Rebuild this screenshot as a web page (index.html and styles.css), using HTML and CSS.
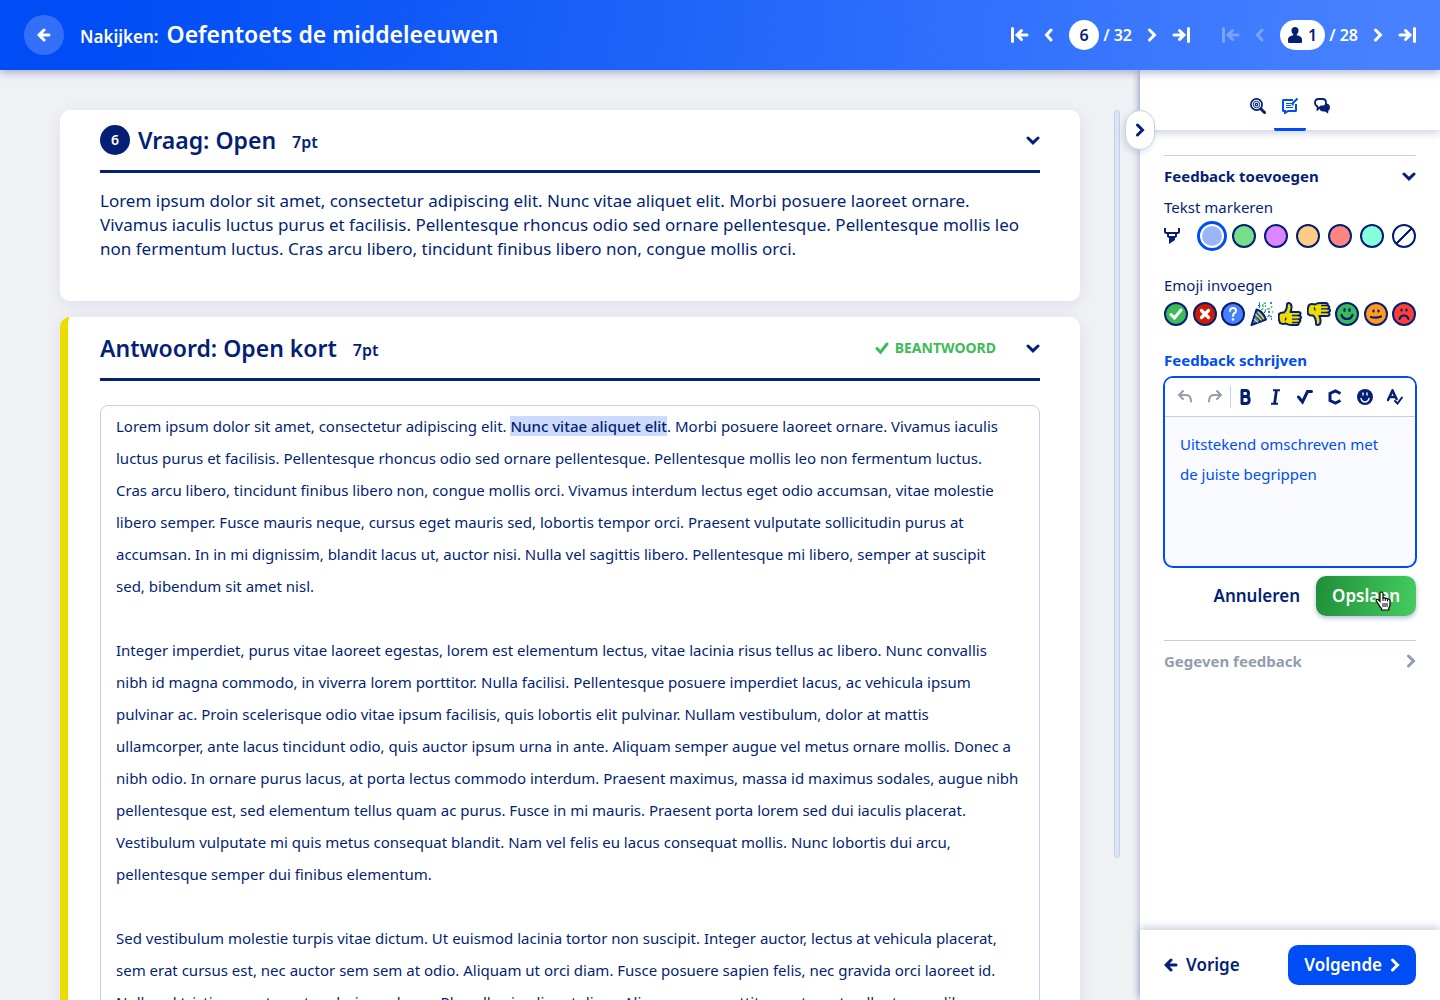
FILE: index.html
```html
<!DOCTYPE html>
<html lang="nl">
<head>
<meta charset="utf-8">
<meta name="viewport" content="width=device-width, initial-scale=1">
<title>Nakijken: Oefentoets de middeleeuwen</title>
<link rel="stylesheet" href="styles.css">
</head>
<body>
<svg class="sprite" aria-hidden="true">
  <symbol id="chevron-right" viewBox="0 0 10 14"><path d="M2.500 2l5 5-5 5" fill="none" stroke="currentColor" stroke-width="3" stroke-linecap="round" stroke-linejoin="miter"/></symbol>
  <symbol id="chevron-left" viewBox="0 0 10 14"><path d="M7 2L2.500 7 7 12" fill="none" stroke="currentColor" stroke-width="3" stroke-linecap="round"/></symbol>
  <symbol id="chevron-down" viewBox="0 0 14 12"><path d="M2 4l5 4.800L12 4" fill="none" stroke="currentColor" stroke-width="3" stroke-linecap="round"/></symbol>
  <symbol id="arrow-left" viewBox="0 0 14 14"><path d="M12 7H3M7 2L2 7l5 5" fill="none" stroke="currentColor" stroke-width="3" stroke-linecap="round"/></symbol>
  <symbol id="arrow-first" viewBox="0 0 18 16"><path d="M1.500 1.500v13M16 8H6.500M10.500 3.500L6 8l4.500 4.500" fill="none" stroke="currentColor" stroke-width="3" stroke-linecap="round"/></symbol>
  <symbol id="arrow-last" viewBox="0 0 18 16"><path d="M16.500 1.500v13M2 8h9.500M7.500 3.500L12 8l-4.500 4.500" fill="none" stroke="currentColor" stroke-width="3" stroke-linecap="round"/></symbol>
  <symbol id="check" viewBox="0 0 14 14"><path d="M2 7.500l3.500 3.700L12 3" fill="none" stroke="currentColor" stroke-width="3" stroke-linecap="round"/></symbol>
</svg>

<header class="topbar">
  <button class="back" aria-label="Terug"><svg width="14" height="14"><use href="#arrow-left"/></svg></button>
  <h1 class="topbar-title"><span class="topbar-label">Nakijken:</span> Oefentoets de middeleeuwen</h1>
  <nav class="pager" aria-label="Vragen">
    <button class="pager-button" aria-label="Eerste vraag"><svg width="18" height="16"><use href="#arrow-first"/></svg></button>
    <button class="pager-button" aria-label="Vorige vraag"><svg width="10" height="14"><use href="#chevron-left"/></svg></button>
    <span class="pager-count"><span class="pill">6</span>/ 32</span>
    <button class="pager-button" aria-label="Volgende vraag"><svg width="10" height="14"><use href="#chevron-right"/></svg></button>
    <button class="pager-button" aria-label="Laatste vraag"><svg width="18" height="16"><use href="#arrow-last"/></svg></button>
  </nav>
  <nav class="pager" aria-label="Studenten">
    <button class="pager-button" disabled aria-label="Eerste student"><svg width="18" height="16"><use href="#arrow-first"/></svg></button>
    <button class="pager-button" disabled aria-label="Vorige student"><svg width="10" height="14"><use href="#chevron-left"/></svg></button>
    <span class="pager-count"><span class="pill"><svg width="14" height="16" viewBox="0 0 14 16"><path d="M7 0c2.200 0 3.500 1.500 3.500 3.500 0 1.600-.6 3-1.700 3.800v1C11.500 8.800 14 10 14 12.500V15q0 1-1 1H1q-1 0-1-1v-2.500C0 10 2.500 8.800 5.200 8.300v-1C4.100 6.500 3.500 5.100 3.500 3.500 3.500 1.500 4.800 0 7 0z" fill="currentColor"/></svg>1</span>/ 28</span>
    <button class="pager-button" aria-label="Volgende student"><svg width="10" height="14"><use href="#chevron-right"/></svg></button>
    <button class="pager-button" aria-label="Laatste student"><svg width="18" height="16"><use href="#arrow-last"/></svg></button>
  </nav>
</header>

<div class="layout">
  <main class="content">
    <div class="cards">
      <section class="card">
        <div class="card-head">
          <span class="number">6</span>
          <h2 class="card-title">Vraag: Open</h2>
          <span class="points">7pt</span>
          <button class="fold" aria-label="Vraag inklappen"><svg width="14" height="12"><use href="#chevron-down"/></svg></button>
        </div>
        <p class="question">Lorem ipsum dolor sit amet, consectetur adipiscing elit. Nunc vitae aliquet elit. Morbi posuere laoreet ornare.<br>Vivamus iaculis luctus purus et facilisis. Pellentesque rhoncus odio sed ornare pellentesque. Pellentesque mollis leo<br>non fermentum luctus. Cras arcu libero, tincidunt finibus libero non, congue mollis orci.</p>
      </section>

      <section class="card card-answer">
        <div class="card-head">
          <h2 class="card-title">Antwoord: Open kort</h2>
          <span class="points">7pt</span>
          <span class="status"><svg width="14" height="14"><use href="#check"/></svg>BEANTWOORD</span>
          <button class="fold" aria-label="Antwoord inklappen"><svg width="14" height="12"><use href="#chevron-down"/></svg></button>
        </div>
        <div class="answer">
          <p>Lorem ipsum dolor sit amet, consectetur adipiscing elit. <mark>Nunc vitae aliquet elit</mark>. Morbi posuere laoreet ornare. Vivamus iaculis<br>luctus purus et facilisis. Pellentesque rhoncus odio sed ornare pellentesque. Pellentesque mollis leo non fermentum luctus.<br>Cras arcu libero, tincidunt finibus libero non, congue mollis orci. Vivamus interdum lectus eget odio accumsan, vitae molestie<br>libero semper. Fusce mauris neque, cursus eget mauris sed, lobortis tempor orci. Praesent vulputate sollicitudin purus at<br>accumsan. In in mi dignissim, blandit lacus ut, auctor nisi. Nulla vel sagittis libero. Pellentesque mi libero, semper at suscipit<br>sed, bibendum sit amet nisl.</p>
          <p>Integer imperdiet, purus vitae laoreet egestas, lorem est elementum lectus, vitae lacinia risus tellus ac libero. Nunc convallis<br>nibh id magna commodo, in viverra lorem porttitor. Nulla facilisi. Pellentesque posuere imperdiet lacus, ac vehicula ipsum<br>pulvinar ac. Proin scelerisque odio vitae ipsum facilisis, quis lobortis elit pulvinar. Nullam vestibulum, dolor at mattis<br>ullamcorper, ante lacus tincidunt odio, quis auctor ipsum urna in ante. Aliquam semper augue vel metus ornare mollis. Donec a<br>nibh odio. In ornare purus lacus, at porta lectus commodo interdum. Praesent maximus, massa id maximus sodales, augue nibh<br>pellentesque est, sed elementum tellus quam ac purus. Fusce in mi mauris. Praesent porta lorem sed dui iaculis placerat.<br>Vestibulum vulputate mi quis metus consequat blandit. Nam vel felis eu lacus consequat mollis. Nunc lobortis dui arcu,<br>pellentesque semper dui finibus elementum.</p>
          <p>Sed vestibulum molestie turpis vitae dictum. Ut euismod lacinia tortor non suscipit. Integer auctor, lectus at vehicula placerat,<br>sem erat cursus est, nec auctor sem sem at odio. Aliquam ut orci diam. Fusce posuere sapien felis, nec gravida orci laoreet id.<br>Nulla vel tristique metus, et scelerisque lacus. Phasellus in aliquet diam. Aliquam nec porttitor metus, at pellentesque libero.</p>
        </div>
      </section>
    </div>
    <div class="scroll-track"><div class="scroll-thumb"></div></div>
  </main>

  <aside class="sidebar">
    <button class="collapse" aria-label="Paneel inklappen"><svg width="10" height="14"><use href="#chevron-right"/></svg></button>
    <div class="tabs">
      <button class="tab" aria-label="Beoordelen"><svg width="16" height="16" viewBox="0 0 16 16" fill="none" stroke="currentColor"><circle cx="6.500" cy="6.500" r="5.600" stroke-width="1.700"/><circle cx="6.500" cy="6.500" r="3.200"/><circle cx="6.500" cy="6.500" r="1.200" stroke-width="1.200"/><path d="M11 11l3.500 3.500" stroke-width="3" stroke-linecap="round"/></svg></button>
      <button class="tab tab-active" aria-label="Feedback"><svg width="16" height="16" viewBox="0 0 16 16" fill="none" stroke="currentColor"><path d="M11 2H1.500Q1 2 1 2.500v10Q1 13 1.500 13H3v2l3-2h7.500q.5 0 .5-.5V6" stroke-width="2"/><path d="M4 5.500h6M4 7.500h5M4 9.500h7"/><path d="M10.500 7.500l.5-2.500L15.500.5" stroke-width="2"/></svg></button>
      <button class="tab" aria-label="Gesprek"><svg width="16" height="16" viewBox="0 0 16 16"><path d="M9 5.500h3.500Q16 6 16 9.500q0 2-1.500 3l-.5 3-3-2H9Q5.500 13 5.500 10z" fill="currentColor"/><path d="M4.500 1h4Q12 1 12 4.700 12 8.500 8.500 8.500H7l-3.500 3V8.300Q1 7.500 1 4.700 1 1 4.500 1z" fill="#fff" stroke="currentColor" stroke-width="1.800"/></svg></button>
    </div>

    <div class="panel">
      <section class="section">
        <button class="section-head">Feedback toevoegen<svg width="14" height="12"><use href="#chevron-down"/></svg></button>
        <h3 class="tool-label">Tekst markeren</h3>
        <div class="marker-row" role="radiogroup" aria-label="Markeerkleur">
          <svg class="marker-icon" width="16" height="16" viewBox="0 0 16 16" fill="none" stroke="currentColor" stroke-width="2"><path d="M1 0v3.500Q1 5 2.500 5h11Q15 5 15 3.500V0M4 5v2.500Q4 9 5.500 9h5Q12 9 12 7.500V5"/><path d="M5 9h6v3l-6 4z" fill="currentColor" stroke="none"/></svg>
          <span class="swatch-slot"><input class="swatch swatch-blue" type="radio" name="kleur" aria-label="Blauw" checked></span>
          <span class="swatch-slot"><input class="swatch swatch-green" type="radio" name="kleur" aria-label="Groen"></span>
          <span class="swatch-slot"><input class="swatch swatch-purple" type="radio" name="kleur" aria-label="Paars"></span>
          <span class="swatch-slot"><input class="swatch swatch-orange" type="radio" name="kleur" aria-label="Oranje"></span>
          <span class="swatch-slot"><input class="swatch swatch-red" type="radio" name="kleur" aria-label="Rood"></span>
          <span class="swatch-slot"><input class="swatch swatch-mint" type="radio" name="kleur" aria-label="Mint"></span>
          <span class="swatch-slot"><input class="swatch swatch-none" type="radio" name="kleur" aria-label="Geen"></span>
        </div>
        <h3 class="tool-label tool-label-emoji">Emoji invoegen</h3>
        <div class="emoji-row">
          <button class="emoji" aria-label="Goed"><svg width="24" height="24" viewBox="0 0 24 24"><circle cx="12" cy="12" r="11" fill="#3dbb56" stroke="#041f74" stroke-width="2"/><path d="M7 12.500l3.500 3.500L17 8" fill="none" stroke="#fff" stroke-width="3" stroke-linecap="round"/></svg></button>
          <button class="emoji" aria-label="Fout"><svg width="24" height="24" viewBox="0 0 24 24"><circle cx="12" cy="12" r="11" fill="#cf1b04" stroke="#041f74" stroke-width="2"/><path d="M8.500 8.500l7 7M15.500 8.500l-7 7" stroke="#fff" stroke-width="3.200" stroke-linecap="round"/></svg></button>
          <button class="emoji" aria-label="Vraag"><svg width="24" height="24" viewBox="0 0 24 24"><circle cx="12" cy="12" r="11" fill="#4781ff" stroke="#041f74" stroke-width="2"/><path d="M9 9q0-3 3-3t3 2.700q0 1.500-1.500 2.500T12 14" fill="none" stroke="#fff" stroke-width="2" stroke-linecap="round"/><circle cx="12" cy="17.500" r="1.300" fill="#fff"/></svg></button>
          <button class="emoji" aria-label="Feest"><svg width="24" height="24" viewBox="0 0 24 24" fill="none"><path d="M6.500 7.500Q13 9 16 17.500L1.500 23z" fill="#4781ff" stroke="#041f74" stroke-width="2" stroke-linejoin="round"/><path d="M5.500 12l6 6.500M4 17l4 3.500M8 10l6 7" stroke="#ecdc00" stroke-width="1.400"/><path d="M6.500 15l4 4M7 11l5.500 6.500" stroke="#041f74"/><path d="M8 4l2-2M9 6l1-3M18 13l4 2M13 12l3-3" stroke="#004df5"/><path d="M11 8q3-1 2-4t3-3M15 10q0-3 3-3t4-3M17 15l2-1M22 10h1" stroke="#3dbb56" stroke-width="1.300" stroke-dasharray="3 1"/><path d="M15 4h1M20 1h2M18 10h2M21 17h1M9 1h1" stroke="#004df5" stroke-width="1.400"/></svg></button>
          <button class="emoji" aria-label="Duim omhoog"><svg width="24" height="24" viewBox="0 0 24 24"><path id="thumb" d="M1 12q2-2 5-1.500Q9 8 9 2.500 9 1 10.500 1 13 1 13.500 4q.3 2.500-1 6h8q2 0 2 1.700T21 13.500q2 .3 2 1.900t-2 1.800q1.500.3 1.300 1.700T20.500 20.500q1 2-1.500 2.500h-6q-3 0-5-1.500-4 1-6-.5Q0 17 1 12z" fill="#ecdc00" stroke="#041f74" stroke-width="2" stroke-linejoin="round"/><path d="M14 13.500h7M14 17.200h7M14 20.500h6M7 18.500q1-1 1-3" fill="none" stroke="#041f74" stroke-width="1.300"/></svg></button>
          <button class="emoji" aria-label="Duim omlaag"><svg width="24" height="24" viewBox="0 0 24 24"><g transform="rotate(180 12 12) scale(-1 1) translate(-24 0)"><use href="#thumb"/><path d="M14 13.500h7M14 17.200h7M14 20.500h6M7 18.500q1-1 1-3" fill="none" stroke="#041f74" stroke-width="1.300"/></g></svg></button>
          <button class="emoji" aria-label="Blij"><svg width="24" height="24" viewBox="0 0 24 24"><circle cx="12" cy="12" r="11" fill="#3dbb56" stroke="#041f74" stroke-width="2"/><path d="M9.500 7v2M14.500 7v2M6.500 13q1.500 4 5.500 4t5.500-4" fill="none" stroke="#041f74" stroke-width="2.200" stroke-linecap="round"/></svg></button>
          <button class="emoji" aria-label="Neutraal"><svg width="24" height="24" viewBox="0 0 24 24"><circle cx="12" cy="12" r="11" fill="#ff9a1f" stroke="#041f74" stroke-width="2"/><path d="M9.500 8.500v1M14.500 8.500v1M7 15q5 1.500 10-.5" fill="none" stroke="#041f74" stroke-width="2.200" stroke-linecap="round"/></svg></button>
          <button class="emoji" aria-label="Verdrietig"><svg width="24" height="24" viewBox="0 0 24 24"><circle cx="12" cy="12" r="11" fill="#ff4031" stroke="#041f74" stroke-width="2"/><path d="M9.500 7.500v1M14.500 7.500v1M7.500 17q1-3.500 4.500-3.500t4.500 3.500" fill="none" stroke="#041f74" stroke-width="2.200" stroke-linecap="round"/></svg></button>
        </div>

        <label class="write-label" for="feedback">Feedback schrijven</label>
        <div class="editor">
          <div class="toolbar">
            <button class="tool tool-muted" aria-label="Ongedaan maken"><svg width="16" height="16" viewBox="0 0 16 16" fill="none" stroke="currentColor" stroke-width="2" stroke-linecap="round"><path d="M6 2L2 6l4 4M2.500 6H9q5 0 5 6.500"/></svg></button>
            <button class="tool tool-muted" aria-label="Opnieuw"><svg width="16" height="16" viewBox="0 0 16 16" fill="none" stroke="currentColor" stroke-width="2" stroke-linecap="round"><path d="M10 2l4 4-4 4M13.500 6H7q-5 0-5 6.500"/></svg></button>
            <span class="divider"></span>
            <button class="tool" aria-label="Vet"><svg width="16" height="16" viewBox="0 0 16 16" fill="none" stroke="currentColor" stroke-width="3"><path d="M3 1.500H8q2.500 0 2.500 3T8 7.500H4M8 7.500q3.200 0 3.200 3.500T8 14.500H3M4 1v14"/></svg></button>
            <button class="tool" aria-label="Cursief"><svg width="16" height="16" viewBox="0 0 16 16" fill="none" stroke="currentColor"><path d="M5 1.200H12M3 14.800H10" stroke-width="2"/><path d="M8.500 1L6.500 15" stroke-width="2.800"/></svg></button>
            <button class="tool" aria-label="Wortel"><svg width="16" height="16" viewBox="0 0 16 16" fill="none" stroke="currentColor" stroke-width="3"><path d="M1.500 8L5.500 13 10.500 2.500H14.500" stroke-linecap="round"/></svg></button>
            <button class="tool" aria-label="Scheikunde"><svg width="16" height="16" viewBox="0 0 16 16" fill="none" stroke="currentColor" stroke-width="3"><path d="M13.500 4.500L8.500 2 3 4.500v7L8.500 14l5-2.500"/></svg></button>
            <button class="tool" aria-label="Emoji"><svg width="16" height="16" viewBox="0 0 16 16"><circle cx="8" cy="8" r="8" fill="currentColor"/><path d="M6 4v2M10 4v2M4 9.500Q5 13 8 13t4-3.500" fill="none" stroke="#fff" stroke-width="1.400" stroke-linecap="round"/></svg></button>
            <button class="tool" aria-label="Spelling"><svg width="16" height="16" viewBox="0 0 16 16" fill="none" stroke="currentColor" stroke-linecap="round"><path d="M1 11L5.500 1.500 9.500 10M3 8h5" stroke-width="2.500"/><path d="M8 12l2.500 2.500L15 8.500" stroke-width="2"/></svg></button>
          </div>
          <textarea class="editor-text" id="feedback">Uitstekend omschreven met de juiste begrippen</textarea>
        </div>
        <div class="actions">
          <button class="button button-text">Annuleren</button>
          <button class="button button-save">Opslaan<svg class="pointer" width="17" height="20" viewBox="0 0 17 20"><path d="M6.500 1q1.500 0 1.500 1.500V7q1.500-.6 2.300.5 1.500-.5 2.200.6 2.500-.4 2.500 2V14q0 1.500-1.200 3v2H6.500v-1.500Q4.500 15.500 3 12.500L1.300 10q-.5-1.500.7-1.700 1.500 0 3 2V2.500Q5 1 6.500 1z" fill="#fff" stroke="#000" stroke-width="1.200"/><path d="M8 12v4M10 12v4M12 12v4M8 7v3M10.300 8v2M12.600 8.500v2" stroke="#000"/></svg></button>
        </div>
      </section>
      <section class="section">
        <button class="section-head section-closed">Gegeven feedback<svg width="10" height="14"><use href="#chevron-right"/></svg></button>
      </section>
    </div>

    <footer class="footer">
      <button class="button button-prev"><svg width="14" height="14"><use href="#arrow-left"/></svg>Vorige</button>
      <button class="button button-next">Volgende<svg width="10" height="14"><use href="#chevron-right"/></svg></button>
    </footer>
  </aside>
</div>
</body>
</html>
```
FILE: styles.css
```css
:root {
  --navy: #041f74;
  --blue: #004df5;
  --line: #c3d0ed;
  --grey: #929daf;
  --green: #3dbb56;
}

* { box-sizing: border-box; }

body {
  margin: 0;
  height: 100vh;
  display: flex;
  flex-direction: column;
  overflow: hidden;
  background: #f0f1f5;
  color: var(--navy);
  font: 15px/24px "Noto Sans", sans-serif;
}

h1, h2, h3, p { margin: 0; }

button {
  padding: 0;
  border: 0;
  background: none;
  color: inherit;
  font: inherit;
  cursor: pointer;
}

svg { display: block; flex: none; }

.sprite { position: absolute; width: 0; height: 0; }

/* Top bar */
.topbar {
  position: relative;
  z-index: 3;
  flex: none;
  display: flex;
  align-items: center;
  gap: 32px;
  height: 70px;
  padding: 0 24px;
  background: linear-gradient(97deg, #004df5 8%, #4781ff 96%);
  box-shadow: 0 3px 8px rgba(4, 31, 116, .3);
  color: #fff;
}

.back {
  display: grid;
  place-items: center;
  width: 40px;
  height: 40px;
  margin-right: -16px;
  border-radius: 50%;
  background: rgba(255, 255, 255, .2);
}

.topbar-title {
  flex: 1;
  display: flex;
  align-items: baseline;
  gap: 8px;
  font-size: 23px;
  font-weight: 600;
  line-height: 32px;
}

.topbar-label { font-size: 17px; }

.pager { display: flex; align-items: center; gap: 15px; font-size: 16px; font-weight: 600; }

.pager-button:disabled { opacity: .3; }

.pager-count { display: flex; align-items: center; gap: 4px; }

.pill {
  display: flex;
  align-items: center;
  justify-content: center;
  gap: 6px;
  min-width: 30px;
  height: 30px;
  padding: 0 8px;
  border-radius: 15px;
  background: #fff;
  color: var(--navy);
}

/* Page columns */
.layout { flex: 1; display: flex; min-height: 0; }

.content {
  flex: 1;
  display: flex;
  gap: 34px;
  min-width: 0;
  padding: 40px 20px 0 60px;
  overflow: hidden;
}

.cards { flex: 1; display: flex; flex-direction: column; gap: 16px; min-width: 0; }

.card {
  flex: none;
  padding: 0 40px 40px;
  border-radius: 10px;
  background: #fff;
  box-shadow: 0 3px 18px rgba(4, 31, 116, .08);
}

.card-answer {
  padding-left: 32px;
  border-left: 8px solid #ecdc00;
}

.card-head {
  display: flex;
  align-items: center;
  height: 63px;
  border-bottom: 3px solid var(--navy);
}

.card-answer .card-head { height: 64px; }

.number {
  display: grid;
  place-items: center;
  width: 30px;
  height: 30px;
  margin-right: 8px;
  border-radius: 50%;
  background: var(--navy);
  color: #fff;
  font-size: 14px;
  font-weight: 600;
}

.card-title { font-size: 23px; font-weight: 600; line-height: 32px; }

.points { margin: 4px auto 0 16px; font-size: 16px; font-weight: 600; }

.status {
  display: flex;
  align-items: center;
  gap: 6px;
  margin-right: 30px;
  color: var(--green);
  font-size: 14px;
  font-weight: 700;
}

.question { padding-top: 16px; font-size: 17px; }

.answer {
  display: flex;
  flex-direction: column;
  gap: 32px;
  margin-top: 24px;
  padding: 4px 15px;
  border: 1px solid var(--line);
  border-radius: 8px;
  line-height: 32px;
}

mark { background: #ccdbfd; color: inherit; font-weight: 500; }

.scroll-track { width: 6px; }

.scroll-thumb {
  height: 84%;
  border: 1px solid var(--line);
  border-radius: 3px;
  background: #dbe3f5;
}

/* Feedback panel */
.sidebar {
  position: relative;
  z-index: 2;
  flex: none;
  display: flex;
  flex-direction: column;
  width: 300px;
  background: #fff;
  box-shadow: 0 0 8px rgba(4, 31, 116, .35);
}

.collapse {
  position: absolute;
  top: 40px;
  left: -15px;
  display: grid;
  place-items: center;
  width: 30px;
  height: 40px;
  border: 1px solid var(--line);
  border-radius: 15px;
  background: #fff;
  box-shadow: -2px 3px 6px rgba(4, 31, 116, .12);
}

.tabs {
  flex: none;
  display: flex;
  justify-content: center;
  height: 60px;
  box-shadow: 0 3px 8px rgba(4, 31, 116, .2);
}

.tab {
  display: flex;
  align-items: flex-end;
  justify-content: center;
  width: 32px;
  height: 61px;
  padding-bottom: 14px;
  border-bottom: 3px solid transparent;
  border-radius: 2px;
}

.tab-active { border-color: var(--blue); color: var(--blue); }

.panel { flex: 1; padding: 25px 24px 0; }

.section { border-top: 1px solid var(--line); }

.section-head {
  display: flex;
  align-items: center;
  justify-content: space-between;
  width: 100%;
  height: 39px;
  font-weight: 700;
}

.section-closed { color: var(--grey); }

.tool-label { font-size: 15px; font-weight: 400; }

.tool-label-emoji { margin-top: 20px; }

.marker-row { display: flex; align-items: center; height: 34px; }

.marker-icon { margin-right: auto; }

.swatch-slot {
  display: flex;
  justify-content: center;
  width: 24px;
  margin-left: 8px;
}

.swatch {
  flex: none;
  appearance: none;
  width: 24px;
  height: 24px;
  margin: 0;
  border: 2px solid var(--navy);
  border-radius: 50%;
}

.swatch:checked {
  width: 30px;
  height: 30px;
  padding: 2px;
  border: 3px solid var(--blue);
  background-clip: content-box;
}

.swatch-blue { background-color: #9bb5fb; }
.swatch-green { background-color: #77df8a; }
.swatch-purple { background-color: #dc85ff; }
.swatch-orange { background-color: #ffcd82; }
.swatch-red { background-color: #ff8582; }
.swatch-mint { background-color: #85ffdc; }
.swatch-none { background: linear-gradient(135deg, transparent 46%, var(--navy) 46% 54%, transparent 54%); }

.emoji-row { display: flex; justify-content: space-between; margin: 5px 0 22px; }

.write-label { display: block; color: var(--blue); font-weight: 700; }

.editor {
  margin: 4px -1px 0;
  border: 2px solid var(--blue);
  border-radius: 10px;
  background: #f9faff;
  overflow: hidden;
}

.toolbar {
  display: flex;
  align-items: center;
  justify-content: space-between;
  height: 39px;
  padding: 0 12px;
  border-bottom: 1px solid var(--line);
  background: #fff;
}

.tool-muted { color: var(--grey); }

.divider { width: 1px; height: 22px; margin: 0 -7px; background: var(--line); }

.editor-text {
  display: block;
  width: 100%;
  height: 149px;
  padding: 12px 32px 12px 15px;
  border: 0;
  outline: 0;
  resize: none;
  background: transparent;
  color: var(--blue);
  font: 15px/30px "Noto Sans", sans-serif;
}

.actions { display: flex; justify-content: flex-end; margin: 8px 0 24px; }

.button {
  position: relative;
  display: flex;
  align-items: center;
  gap: 8px;
  height: 40px;
  padding: 0 16px;
  border-radius: 10px;
  font-size: 17px;
  font-weight: 600;
}

.button-save {
  background: linear-gradient(97deg, #1f8f37, #45cc60);
  box-shadow: 0 2px 5px rgba(4, 31, 116, .3);
  color: #fff;
  cursor: pointer;
}

.pointer { position: absolute; top: 15px; right: 24px; }

.footer {
  flex: none;
  display: flex;
  align-items: center;
  justify-content: space-between;
  height: 70px;
  padding: 0 24px;
  box-shadow: 0 -3px 8px rgba(4, 31, 116, .2);
}

.button-prev { padding: 0; }

.button-next { background: var(--blue); color: #fff; }
```
